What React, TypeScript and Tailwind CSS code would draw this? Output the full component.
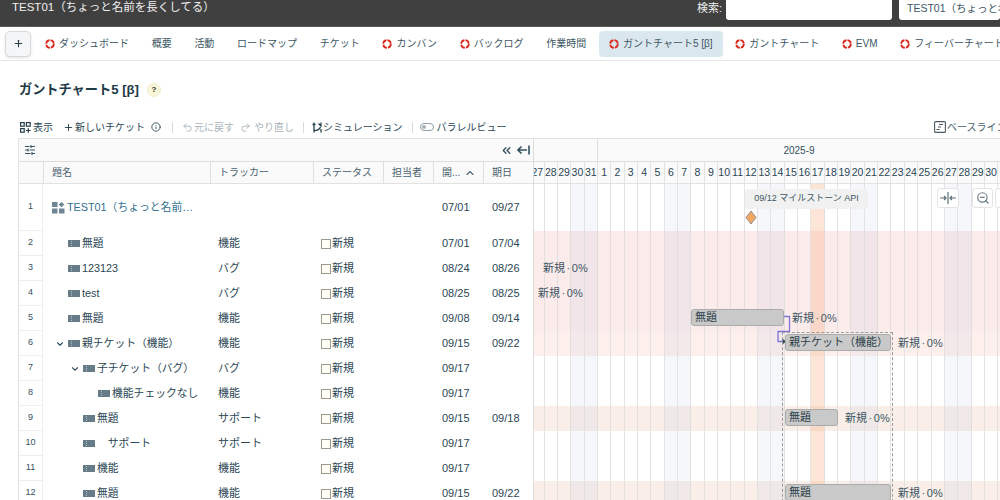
import React from "react";
import { ChevronDown, ChevronUp, ChevronsLeft, SlidersHorizontal, Plus, Info, Undo2, Redo2, ZoomOut } from "lucide-react";

function RedmineIcon() {
  return (
    <svg width="10" height="10" viewBox="0 0 10 10" className="shrink-0">
      <circle cx="5" cy="5" r="3.8" fill="none" stroke="#d8271c" strokeWidth="1.8" strokeDasharray="4.9 1.07" />
    </svg>
  );
}

function TicketIcon() {
  return (
    <svg width="12" height="7" viewBox="0 0 12 7" className="shrink-0">
      <rect width="12" height="7" fill="#667c88" />
      <path d="M3.500 1v1M3.500 3v1M3.500 5v1" stroke="#c9d2d7" strokeWidth="0.8" />
    </svg>
  );
}

function ProjectIcon() {
  return (
    <svg width="13" height="12" viewBox="0 0 13 12" className="shrink-0">
      <rect x="0" y="0" width="5.5" height="5" fill="#6f8794" />
      <path d="M9.500 0l3 2.600-3 2.600-3-2.600z" fill="#6f8794" />
      <rect x="0" y="6.500" width="5.500" height="5" fill="#6f8794" />
      <rect x="7" y="6.500" width="5.500" height="5" fill="#6f8794" />
    </svg>
  );
}

const tabs = [
  { t: "ダッシュボード", r: true },
  { t: "概要" },
  { t: "活動" },
  { t: "ロードマップ" },
  { t: "チケット" },
  { t: "カンバン", r: true },
  { t: "バックログ", r: true },
  { t: "作業時間" },
  { t: "ガントチャート5 [β]", r: true, a: true },
  { t: "ガントチャート", r: true },
  { t: "EVM", r: true },
  { t: "フィーバーチャート", r: true },
];

type Row = {
  n: number;
  title: string;
  kind: string;
  status?: boolean;
  start: string;
  due: string;
  indent: string;
  chevron?: boolean;
  tall?: boolean;
  bg: string;
};

const rows: Row[] = [
  { n: 1, title: "TEST01（ちょっと名前…", kind: "", start: "07/01", due: "09/27", indent: "pl-[9px]", tall: true, bg: "bg-white" },
  { n: 2, title: "無題", kind: "機能", status: true, start: "07/01", due: "07/04", indent: "pl-[25px]", bg: "bg-[#fcebeb]" },
  { n: 3, title: "123123", kind: "バグ", status: true, start: "08/24", due: "08/26", indent: "pl-[25px]", bg: "bg-[#fcebeb]" },
  { n: 4, title: "test", kind: "バグ", status: true, start: "08/25", due: "08/25", indent: "pl-[25px]", bg: "bg-[#fcebeb]" },
  { n: 5, title: "無題", kind: "機能", status: true, start: "09/08", due: "09/14", indent: "pl-[25px]", bg: "bg-[#fcebeb]" },
  { n: 6, title: "親チケット（機能）", kind: "機能", status: true, start: "09/15", due: "09/22", indent: "pl-[12px]", chevron: true, bg: "bg-[#fdefec]" },
  { n: 7, title: "子チケット（バグ）", kind: "バグ", status: true, start: "09/17", due: "", indent: "pl-[27px]", chevron: true, bg: "bg-white" },
  { n: 8, title: "機能チェックなし", kind: "機能", status: true, start: "09/17", due: "", indent: "pl-[55px]", bg: "bg-white" },
  { n: 9, title: "無題", kind: "サポート", status: true, start: "09/15", due: "09/18", indent: "pl-[40px]", bg: "bg-[#f9eee8]" },
  { n: 10, title: "　サポート", kind: "サポート", status: true, start: "09/17", due: "", indent: "pl-[40px]", bg: "bg-white" },
  { n: 11, title: "機能", kind: "機能", status: true, start: "09/17", due: "", indent: "pl-[40px]", bg: "bg-white" },
  { n: 12, title: "無題", kind: "機能", status: true, start: "09/15", due: "09/22", indent: "pl-[40px]", bg: "bg-[#f9eee8]" },
];

const days = [27, 28, 29, 30, 31, ...Array.from({ length: 30 }, (_, i) => i + 1)];
const isWeekend = (i: number) => [3, 4, 10, 11, 17, 18, 24, 25, 31, 32].includes(i);

function HeadCell({ children, className }: { children: React.ReactNode; className: string }) {
  return (
    <div className={`flex items-center h-full pl-[8px] text-[10px] text-[#4b6270] border-l border-[#dfdfdf] ${className}`}>
      {children}
    </div>
  );
}

function Label({ className, children }: { className: string; children: React.ReactNode }) {
  return <div className={`absolute z-20 whitespace-nowrap text-[11px] leading-[14px] text-[#3c5663] [word-spacing:-1.5px] ${className}`}>{children}</div>;
}

function Bar({ className, children }: { className: string; children: React.ReactNode }) {
  return (
    <div className={`absolute z-20 rounded-[3px] bg-[#c9c9c9] border border-[#ababab] pl-[3px] flex items-center text-[11px] text-[#2b3f49] whitespace-nowrap ${className}`}>
      {children}
    </div>
  );
}

export default function App() {
  return (
    <div className="relative w-[1000px] h-[500px] overflow-hidden bg-white text-[#2b4654] font-['Liberation_Sans','Noto_Sans_CJK_JP',sans-serif]">
      {/* top header */}
      <div className="flex h-[27px] items-start bg-[#404040] pl-[12px] border-b border-[#5a5a5a]">
        <div className="text-[11.5px] leading-[15px] text-[#f0f0f0] whitespace-nowrap">TEST01（ちょっと名前を長くしてる）</div>
        <div className="ml-auto flex items-start">
          <span className="text-[11px] leading-[16px] text-[#f0f0f0] mr-[4px]">検索:</span>
          <div className="w-[166px] h-[20px] bg-white rounded-b-[3px]" />
          <div className="w-[101px] h-[20px] ml-[7px] pl-[8px] bg-white rounded-b-[3px] text-[10.5px] leading-[16px] text-[#3c5663] whitespace-nowrap overflow-hidden">
            TEST01（ちょっと名前を長くしてる）
          </div>
        </div>
      </div>

      {/* tabs */}
      <div className="flex items-center h-[34px] pl-[5px] border-b border-[#e6e6e6] whitespace-nowrap overflow-hidden">
        <div className="flex items-center justify-center shrink-0 w-[26px] h-[26px] mr-[4px] rounded-[5px] bg-[#f5f6f7] border border-[#d9d9d9] shadow-sm">
          <Plus size={11} strokeWidth={2.5} color="#2b3f49" />
        </div>
        <div className="flex items-center gap-[2.7px]">
          {tabs.map((t) => (
            <div
              key={t.t}
              className={`flex items-center h-[26px] px-[10px] gap-[4px] rounded-[4px] text-[10px] text-[#3c5663] shrink-0 ${t.a ? "bg-[#dbe7ee]" : ""}`}
            >
              {t.r && <RedmineIcon />}
              <span>{t.t}</span>
            </div>
          ))}
        </div>
      </div>

      {/* title */}
      <div className="flex items-center h-[55px] pl-[19px] pt-[2px]">
        <h1 className="text-[13.2px] font-bold text-[#1e3a46]">ガントチャート5 [β]</h1>
        <span className="ml-[8px] flex items-center justify-center w-[14px] h-[14px] rounded-full bg-[#faf6d8] border border-[#f0ecd0] text-[8px] font-bold text-[#333]">?</span>
      </div>

      {/* toolbar */}
      <div className="flex items-center h-[22px] pl-[20px] text-[10px] whitespace-nowrap">
        <svg width="11" height="11" viewBox="0 0 11 11" className="mr-[2px]" fill="none" stroke="#24404d" strokeWidth="1.2">
          <rect x="0.6" y="0.6" width="3.6" height="3.6" />
          <rect x="6.4" y="0.6" width="3.8" height="3.6" />
          <rect x="0.6" y="6.6" width="3.6" height="3.6" />
          <path d="M8.3 6.2v4.6M6 8.500h4.600" />
        </svg>
        <span className="text-[#2b4654]">表示</span>
        <Plus size={11} className="ml-[10px] mr-[1px]" color="#24404d" />
        <span className="text-[#2b4654]">新しいチケット</span>
        <Info size={10} className="ml-[6px]" color="#24404d" />
        <div className="w-px h-[11px] bg-[#d9d9d9] ml-[11px] mr-[9px]" />
        <Undo2 size={11} color="#a9b4ba" />
        <span className="ml-[1px] text-[#a9b4ba]">元に戻す</span>
        <Redo2 size={11} color="#a9b4ba" className="ml-[6px]" />
        <span className="ml-[3px] text-[#a9b4ba]">やり直し</span>
        <div className="w-px h-[11px] bg-[#d9d9d9] ml-[9px] mr-[8px]" />
        <svg width="11" height="11" viewBox="0 0 11 11" fill="none" stroke="#24404d" strokeWidth="1.3">
          <path d="M2 0.5v10M9 0.5v4M9 7v3.5M0.5 2.5h3M6.5 1.5l3 3M2.5 8.5c2 0 5-1 6-3.5" />
        </svg>
        <span className="text-[#2b4654]">シミュレーション</span>
        <div className="w-px h-[11px] bg-[#d9d9d9] ml-[9px] mr-[7px]" />
        <svg width="14" height="8" viewBox="0 0 14 8" fill="none">
          <rect x="0.5" y="0.5" width="13" height="7" rx="3.5" stroke="#8f9ca3" />
          <circle cx="4" cy="4" r="2" fill="#a5afb5" />
        </svg>
        <span className="ml-[3px] text-[#2b4654]">パラレルビュー</span>
        <div className="ml-auto flex items-center shrink-0 w-[66px]">
          <svg width="12" height="12" viewBox="0 0 12 12" fill="none" stroke="#4d5a61" strokeWidth="1.1" className="shrink-0">
            <rect x="0.6" y="0.6" width="10.8" height="10.8" rx="1" />
            <path d="M5 3.5h4M4 6h3M2.5 8.5h3" />
          </svg>
          <span className="ml-[1px] text-[#4b6270]">ベースライン</span>
        </div>
      </div>

      {/* table + gantt */}
      <div className="flex ml-[18px] border-l border-t border-[#e2e2e2] h-[362px] overflow-hidden">
        {/* left table */}
        <div className="w-[514px] shrink-0">
          <div className="flex items-center justify-between h-[23px] bg-[#fafafa] border-b border-[#dedede] pl-[5px] pr-[3px]">
            <SlidersHorizontal size={12} strokeWidth={2.2} color="#33505e" />
            <div className="flex items-center gap-[4px]">
              <ChevronsLeft size={13} strokeWidth={2.4} color="#33505e" />
              <svg width="13" height="12" viewBox="0 0 13 12" fill="none" stroke="#33505e" strokeWidth="1.6">
                <path d="M1 6h9M4.500 2.500L1 6l3.500 3.500M12 1.500v9" />
              </svg>
            </div>
          </div>
          <div className="flex h-[22px] bg-[#fafafa] border-b border-[#e2e2e2]">
            <div className="w-[24px] shrink-0" />
            <HeadCell className="w-[167px]">題名</HeadCell>
            <HeadCell className="w-[103px]">トラッカー</HeadCell>
            <HeadCell className="w-[70px]">ステータス</HeadCell>
            <HeadCell className="w-[50px]">担当者</HeadCell>
            <HeadCell className="w-[50px]">
              開...
              <ChevronUp size={12} strokeWidth={2.2} className="ml-[4px]" />
            </HeadCell>
            <HeadCell className="w-[50px]">期日</HeadCell>
          </div>
          {rows.map((r) => (
            <div key={r.n} className={`flex items-center text-[11px] text-[#2b4654] ${r.tall ? "h-[47px]" : "h-[25px]"}`}>
              <div className="flex items-center justify-center w-[24px] h-full shrink-0 border-r border-b border-[#eeeeee] text-[9px] text-[#33505e]">
                {r.n}
              </div>
              <div className={`flex items-center w-[167px] shrink-0 whitespace-nowrap overflow-hidden text-[10.8px] ${r.indent}`}>
                {r.chevron && <ChevronDown size={10} strokeWidth={2.6} color="#33505e" className="mr-[3px] shrink-0" />}
                {r.tall ? <ProjectIcon /> : <TicketIcon />}
                <span className={`ml-[2px] ${r.tall ? "text-[#33708f]" : ""}`}>{r.title}</span>
              </div>
              <div className="w-[103px] shrink-0 pl-[8px]">{r.kind}</div>
              <div className="flex items-center w-[120px] shrink-0 pl-[8px]">
                {r.status && (
                  <>
                    <span className="w-[10px] h-[10px] mr-px border border-[#9b9b8f] bg-[#fffff6]" />
                    新規
                  </>
                )}
              </div>
              <div className="w-[50px] shrink-0 pl-[9px]">{r.start}</div>
              <div className="w-[50px] shrink-0 pl-[9px]">{r.due}</div>
            </div>
          ))}
        </div>

        {/* gantt */}
        <div className="relative flex-1 border-l border-[#dcdcdc] overflow-hidden">
          <div className="flex h-[23px] bg-[#fafafa] border-b border-[#dedede] text-[10px] text-[#33505e]">
            <div className="w-[64px] shrink-0 border-r border-[#dedede]" />
            <div className="w-[402px] shrink-0 flex items-center justify-center">2025-9</div>
          </div>
          <div className="flex h-[22px] bg-[#fafafa] border-b border-[#e2e2e2]">
            {days.map((d, i) => (
              <div
                key={i}
                className={`flex items-center justify-center h-full w-[13.35px] shrink-0 border-r border-[#e2e2e2] text-[10.5px] text-[#2b4654] whitespace-nowrap ${i === 0 ? "-ml-[2.8px]" : ""}`}
              >
                {d}
              </div>
            ))}
          </div>
          {rows.map((r) => (
            <div key={r.n} className={`${r.bg} ${r.tall ? "h-[47px]" : "h-[25px]"}`} />
          ))}

          {/* day columns laid over the row bands */}
          <div className="absolute left-0 top-[45px] bottom-0 flex z-10">
            {days.map((d, i) => (
              <div
                key={i}
                className={`h-full w-[13.35px] shrink-0 border-r border-[#dcdcdc]/80 ${i === 0 ? "-ml-[2.8px]" : ""} ${
                  i === 21 ? "bg-[#f4a878]/30" : isWeekend(i) ? "bg-[#a9bfe0]/12" : ""
                }`}
              />
            ))}
          </div>

          {/* milestone */}
          <div className="absolute z-20 left-[211px] top-[50px] w-[123px] h-[20px] flex items-center justify-center rounded-[4px] bg-[#f1f1f1] text-[9px] text-[#3c5663] whitespace-nowrap">
            09/12 マイルストーン API
          </div>
          <svg className="absolute z-20 left-[211px] top-[71px]" width="12" height="15" viewBox="0 0 12 15">
            <path d="M6 1L11 7.500 6 14 1 7.500z" fill="#f4a862" stroke="#8f8f8f" strokeLinejoin="round" />
          </svg>

          {/* float controls */}
          <div className="absolute z-30 left-[403px] top-[49px] w-[22px] h-[20px] flex items-center justify-center rounded-[3px] bg-white border border-[#e4e4e4]">
            <svg width="18" height="12" viewBox="0 0 18 12" fill="none" stroke="#5b6f7a" strokeWidth="1.2">
              <path d="M9 0v12M1 6h6M5 4l2 2-2 2M17 6h-6M13 4l-2 2 2 2" />
            </svg>
          </div>
          <div className="absolute z-30 left-[438px] top-[49px] w-[21px] h-[20px] flex items-center justify-center rounded-[3px] bg-white border border-[#e4e4e4]">
            <ZoomOut size={14} color="#6b7b84" />
          </div>
          <div className="absolute z-30 left-[461px] top-[49px] w-[21px] h-[20px] rounded-[3px] bg-white border border-[#e4e4e4]" />

          {/* labels */}
          <Label className="left-[9px] top-[122px]">新規 · 0%</Label>
          <Label className="left-[4px] top-[147px]">新規 · 0%</Label>

          {/* bars */}
          <Bar className="left-[157px] top-[170px] w-[93px] h-[17px]">無題</Bar>
          <Label className="left-[258px] top-[172px]">新規 · 0%</Label>

          <svg className="absolute z-20 left-[243px] top-[176px]" width="16" height="36" viewBox="0 0 16 36" fill="none">
            <path d="M7 1.500h5.500v15H1v10H6" stroke="#7d74d8" strokeWidth="1.3" />
            <path d="M5.500 23.500l3.500 3-3.500 3z" fill="#3c4a52" />
          </svg>

          <div className="absolute z-20 left-[248px] top-[193px] w-[111px] h-[180px] border border-dashed border-[#9a9a9a]" />
          <Bar className="left-[251px] top-[195px] w-[106px] h-[17px]">親チケット（機能）</Bar>
          <Label className="left-[364px] top-[197px]">新規 · 0%</Label>

          <Bar className="left-[251px] top-[270px] w-[53px] h-[17px]">無題</Bar>
          <Label className="left-[311px] top-[272px]">新規 · 0%</Label>

          <Bar className="left-[251px] top-[345px] w-[106px] h-[17px]">無題</Bar>
          <Label className="left-[364px] top-[347px]">新規 · 0%</Label>
        </div>
      </div>
    </div>
  );
}
